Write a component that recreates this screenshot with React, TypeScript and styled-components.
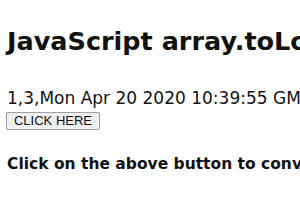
import React from "react";
import styled, { createGlobalStyle } from "styled-components";

const Global = createGlobalStyle`
  html, body { margin: 0; padding: 0; background: #fff; }
  body { font-family: "DejaVu Sans", "Open Sans", sans-serif; color: #000; }
`;

const Page = styled.div`
  display: flex;
  flex-direction: column;
  align-items: flex-start;
  padding: 0 0 0 7px;
  width: 300px;
  box-sizing: border-box;
  overflow: hidden;
  white-space: nowrap;
`;

const Title = styled.h1`
  margin: 26px 0 0 0;
  font-size: 25.5px;
  line-height: 30px;
  font-weight: 700;
  color: #121212;
`;

const Result = styled.p`
  margin: 32px 0 0 0;
  font-size: 17px;
  line-height: 20px;
  color: #121212;
`;

const Button = styled.button`
  margin: 4px 0 0 -1px;
  width: 94px;
  height: 18px;
  padding: 0;
  font-family: "Liberation Sans", Arial, sans-serif;
  font-size: 13px;
  line-height: 16px;
  color: #111;
  background: #efefef;
  border: 1px solid #a0a0a0;
  border-radius: 2px;
`;

const Note = styled.p`
  margin: 24px 0 0 0;
  font-size: 15.5px;
  line-height: 20px;
  font-weight: 700;
  color: #121212;
`;

export default function App() {
  return (
    <>
      <Global />
      <Page>
        <Title>JavaScript array.toLocaleString() Method</Title>
        <Result>1,3,Mon Apr 20 2020 10:39:55 GMT+0530 (India Standard Time)</Result>
        <Button>CLICK HERE</Button>
        <Note>Click on the above button to convert the array into a string.</Note>
      </Page>
    </>
  );
}
